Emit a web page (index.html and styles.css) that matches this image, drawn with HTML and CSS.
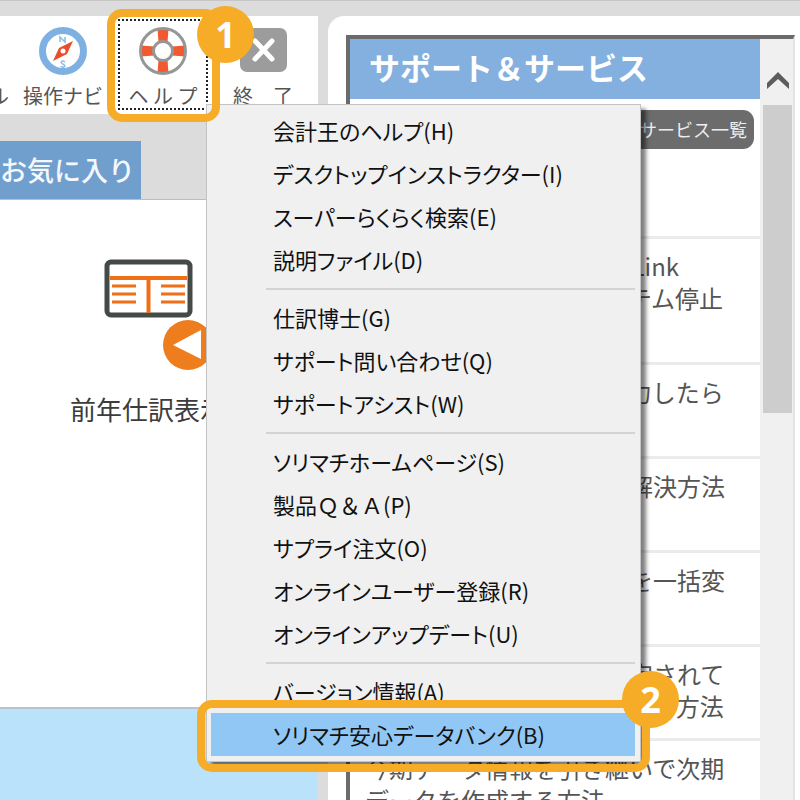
FILE: index.html
```html
<!DOCTYPE html>
<html lang="ja">
<head>
  <meta charset="UTF-8" />
  <meta name="viewport" content="width=device-width, initial-scale=1" />
  <title>会計王 ヘルプメニュー</title>
  <link rel="stylesheet" href="styles.css">
</head>
<body>

  <div class="window">

    <div class="main">
      <div class="toolbar">
        <button type="button" class="tool tool-cut"><span class="tool-label">ル</span></button>

        <button type="button" class="tool">
          <svg width="50" height="50" viewBox="0 0 50 50" aria-hidden="true">
            <circle cx="25" cy="25" r="20.5" fill="#fff" stroke="#7fb0e2" stroke-width="7" />
            <path d="M22 16v-5l5 5v-5M27 36c-3-2-5 0-3 1.500s4 2 2 3.500c-1 .5-3 0-3-1" fill="none" stroke="#8bbbe6" stroke-width="1.500" />
            <path d="M35 15L29 28L15 35L21 22Z" fill="#e94e2c" />
            <circle cx="25" cy="25" r="2.500" fill="#fff" />
          </svg>
          <span class="tool-label">操作ナビ</span>
        </button>

        <div class="help">
          <button type="button" class="tool tool-focus">
            <svg width="50" height="50" viewBox="0 0 50 50" aria-hidden="true">
              <g fill="#f15a30">
                <path d="M19.500 3h11l-1 13h-9z" />
                <path d="M19.500 47h11l-1-13h-9z" />
                <path d="M3 19.500v11l13-1v-9z" />
                <path d="M47 19.500v11l-13-1v-9z" />
              </g>
              <circle cx="25" cy="25" r="22.500" fill="none" stroke="#969696" stroke-width="3" />
              <circle cx="25" cy="25" r="9.500" fill="#fff" stroke="#969696" stroke-width="3" />
            </svg>
            <span class="tool-label">ヘ ル プ</span>
          </button>
          <div class="callout callout-help"><span class="badge">1</span></div>

          <ul class="menu">
            <li><button type="button">会計王のヘルプ(H)</button></li>
            <li><button type="button">デスクトップインストラクター(I)</button></li>
            <li><button type="button">スーパーらくらく検索(E)</button></li>
            <li><button type="button">説明ファイル(D)</button></li>
            <li class="line"></li>
            <li><button type="button">仕訳博士(G)</button></li>
            <li><button type="button">サポート問い合わせ(Q)</button></li>
            <li><button type="button">サポートアシスト(W)</button></li>
            <li class="line"></li>
            <li><button type="button">ソリマチホームページ(S)</button></li>
            <li><button type="button" class="full">製品Ｑ＆Ａ(P)</button></li>
            <li><button type="button">サプライ注文(O)</button></li>
            <li><button type="button">オンラインユーザー登録(R)</button></li>
            <li><button type="button">オンラインアップデート(U)</button></li>
            <li class="line"></li>
            <li><button type="button">バージョン情報(A)</button></li>
            <li class="selected">
              <button type="button">ソリマチ安心データバンク(B)</button>
              <div class="callout callout-item"><span class="badge">2</span></div>
            </li>
          </ul>
        </div>

        <button type="button" class="tool">
          <svg width="50" height="50" viewBox="0 0 50 50" aria-hidden="true">
            <rect x="2" y="2" width="47" height="44" rx="7" fill="#9c9c9c" />
            <path d="M17 15L34 33M34 15L17 33" stroke="#fff" stroke-width="5" stroke-linecap="round" />
          </svg>
          <span class="tool-label">終　了</span>
        </button>
      </div>

      <div class="tabs">
        <button type="button" class="tab">お気に入り</button>
      </div>

      <div class="favorites">
        <button type="button" class="favorite">
          <svg width="130" height="120" viewBox="0 0 130 120" aria-hidden="true">
            <rect x="24" y="12" width="83" height="53" rx="4" fill="#fff" stroke="#434a48" stroke-width="5" />
            <path d="M27 28h77M65.500 28v35" stroke="#ee6f16" stroke-width="4" />
            <path d="M29 36h24M29 44h24M29 52h24M78 36h24M78 44h24M78 52h24" stroke="#ee6f16" stroke-width="3" />
            <circle cx="105" cy="95" r="25" fill="#ee7d1d" />
            <path d="M90 95L118 80V109Z" fill="#fff" />
          </svg>
          <span>前年仕訳表示</span>
        </button>
      </div>

      <div class="info"></div>
    </div>

    <div class="support">
      <div class="frame">
        <div class="page">
          <h2>サポート＆サービス</h2>
          <div class="page-top"><a href="#" class="list-link">サポート＆サービス一覧</a></div>
          <ul class="news">
            <li><a href="#">会計王ご利用者へMoneyLink<br>メンテナンスによるシステム停止<br>のお知らせ</a></li>
            <li><a href="#">期首の残高を間違えて入力したら<br>どうする</a></li>
            <li><a href="#">貸借が合わない時などの解決方法<br>のご案内</a></li>
            <li><a href="#">登録した仕訳の勘定科目を一括変<br>換する方法</a></li>
            <li><a href="#">前期からの繰越残高が設定されて<br>いるデータを選んで修正する方法</a></li>
            <li><a href="#">今期データ情報を引き継いで次期<br>データを作成する方法</a></li>
          </ul>
        </div>
        <div class="scrollbar">
          <button type="button" class="scroll-up" aria-label="上へ">
            <svg width="24" height="20" viewBox="0 0 24 20" aria-hidden="true">
              <path d="M1 18V12L12 1L23 12V18L12 8Z" fill="#5d5d5d" />
            </svg>
          </button>
          <div class="thumb"></div>
        </div>
      </div>
    </div>

  </div>

</body>
</html>
```
FILE: styles.css
```css
* {
  box-sizing: border-box;
}
body {
  margin: 0;
  background: #dcdcdc;
  font-family: "Noto Sans CJK JP", sans-serif;
  color: #444;
  overflow: hidden;
}
button {
  margin: 0;
  padding: 0;
  border: none;
  background: none;
  font: inherit;
  color: inherit;
  cursor: pointer;
}
ul {
  margin: 0;
  padding: 0;
  list-style: none;
}
.window {
  display: grid;
  grid-template-columns: 318px 1fr;
  grid-template-rows: minmax(0, 1fr);
  column-gap: 10px;
  height: 100vh;
  padding-top: 15px;
  border-top: 1px solid #c6c6c6;
}

/* left side */
.main {
  display: flex;
  flex-direction: column;
  min-width: 0;
}
.toolbar {
  display: flex;
  height: 98px;
  background: #fff;
}
.tool {
  display: flex;
  flex-direction: column;
  align-items: center;
  width: 100px;
  height: 98px;
  padding-top: 10px;
}
.tool-cut {
  width: 13px;
  padding-top: 60px;
  padding-right: 4px;
  align-items: flex-end;
  overflow: hidden;
}
.tool-label {
  margin-top: 6px;
  font-size: 20px;
  line-height: 28px;
  color: #555;
  white-space: nowrap;
}
.help {
  position: relative;
  z-index: 2;
}
.tool-focus::before {
  content: "";
  position: absolute;
  inset: 3px 5px 4px 5px;
  border: 2px dotted #222;
}
.callout {
  position: absolute;
  border: 8px solid #f6ac26;
  border-radius: 15px;
  pointer-events: none;
}
.callout-help {
  inset: -7px -7px -8px -6px;
  z-index: 3;
}
.callout-item {
  inset: -13px -15px -16px -14px;
}
.badge {
  position: absolute;
  top: -11px;
  right: -42px;
  width: 57px;
  height: 57px;
  border-radius: 50%;
  background: #f6ac26;
  color: #fff;
  font: bold 36px/57px "Open Sans", sans-serif;
  text-align: center;
}
.callout-item .badge {
  top: -37px;
  right: -37px;
}

.menu {
  position: absolute;
  top: 88px;
  left: 93px;
  width: 435px;
  padding: 4px 5px 5px 4px;
  background: #f0f0f0;
  border: 1px solid #c4c4c4;
  box-shadow: 5px 5px 4px rgba(0, 0, 0, 0.5);
}
.menu li {
  position: relative;
}
.menu button {
  display: block;
  width: 100%;
  height: 43px;
  padding-left: 62px;
  font-size: 22px;
  line-height: 41px;
  font-feature-settings: "palt";
  text-align: left;
  white-space: nowrap;
  color: #111;
}
.menu .full {
  font-feature-settings: normal;
}
.menu .line {
  height: 15px;
  padding: 7px 0 6px 55px;
}
.menu .line::before {
  content: "";
  display: block;
  height: 2px;
  background: #d3d3d3;
}
.menu .selected {
  background: #91c7f5;
}

.tabs {
  padding-top: 27px;
  border-bottom: 1px solid #bdbdbd;
}
.tab {
  display: block;
  width: 141px;
  height: 58px;
  padding-right: 7px;
  background: #709fce;
  font-size: 27px;
  font-weight: 500;
  line-height: 58px;
  text-align: right;
  white-space: nowrap;
  color: #f4f8fc;
}
.favorites {
  flex: 1;
  padding: 50px 0 0 70px;
  background: #fff;
}
.favorite {
  display: flex;
  flex-direction: column;
  align-items: center;
  font-size: 26px;
  line-height: 38px;
  color: #3c3c3c;
}
.favorite svg {
  margin-bottom: 20px;
}
.info {
  height: 93px;
  border-top: 2px solid #b9c4ca;
  background: #bae3fb;
}

/* right side */
.support {
  min-width: 0;
  padding: 19px 5px 0 18px;
  background: #fff;
  border-top-left-radius: 16px;
}
.frame {
  display: flex;
  height: 100%;
  border: 4px solid #6b6b6b;
  border-right: 2px solid #e3e3e3;
  border-bottom: none;
  overflow: hidden;
}
.page {
  flex: 1;
  min-width: 0;
}
h2 {
  margin: 0;
  height: 60px;
  padding-left: 19px;
  background: #84b0df;
  font-size: 31px;
  line-height: 56px;
  color: #fff;
  white-space: nowrap;
}
.page-top {
  display: flex;
  justify-content: flex-end;
  align-items: flex-start;
  height: 140px;
  padding: 11px 6px 0 0;
  border-bottom: 3px solid #ebebeb;
}
.list-link {
  height: 39px;
  padding: 0 7px 0 12px;
  border-radius: 11px;
  background: #6c6c6c;
  font-size: 18px;
  line-height: 39px;
  color: #eee;
  text-decoration: none;
}
.news li {
  padding: 11px 0 16px 15px;
  border-bottom: 3px solid #ebebeb;
}
.news a {
  display: block;
  font-size: 24px;
  line-height: 32px;
  color: #555;
  text-decoration: none;
  white-space: nowrap;
}
.scrollbar {
  width: 33px;
  padding: 0 1px 0 3px;
  background: #f0f0f0;
}
.scroll-up {
  display: flex;
  align-items: center;
  justify-content: center;
  width: 100%;
  height: 66px;
  padding-top: 18px;
}
.thumb {
  height: 308px;
  background: #cdcdcd;
}
```
